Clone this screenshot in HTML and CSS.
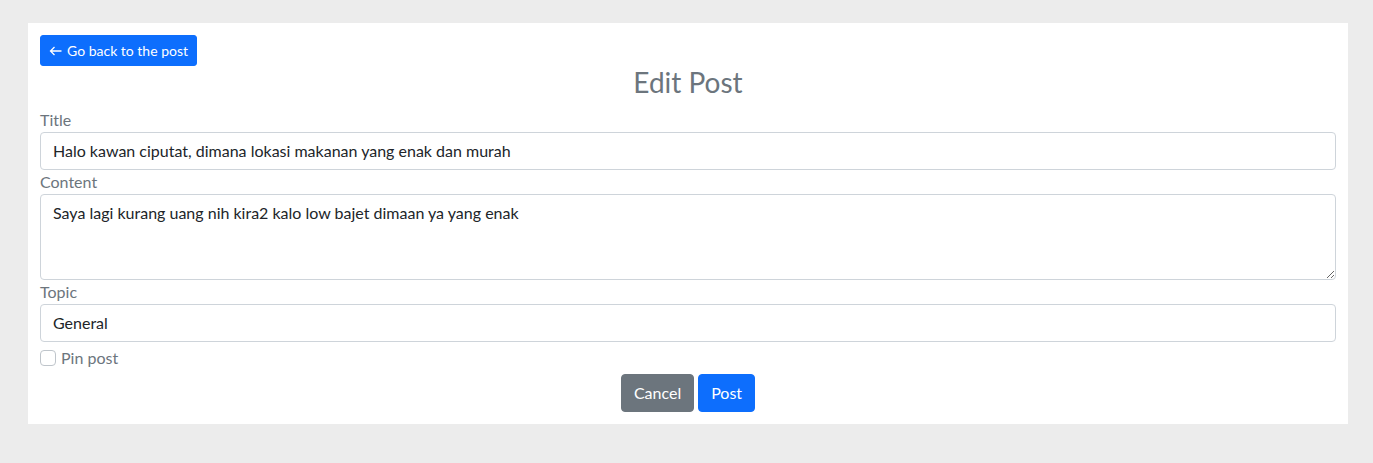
FILE: index.html
```html
<!DOCTYPE html>
<html lang="id">
<head>
<meta charset="utf-8">
<title>Edit Post</title>
<link rel="stylesheet" href="styles.css">
</head>
<body>
<main class="card">
  <div class="top-row">
    <a class="btn btn-primary btn-sm back-btn" href="#"><svg class="arrow" width="13" height="10" viewBox="0 0 13 10" aria-hidden="true"><path d="M12.5 5H1.5M5.5 1L1.5 5L5.5 9" fill="none" stroke="#fff" stroke-width="1.3"/></svg>Go back to the post</a>
  </div>
  <h3 class="page-title">Edit Post</h3>
  <form class="form">
    <label class="form-label" for="title">Title</label>
    <input class="form-control" id="title" type="text" value="Halo kawan ciputat, dimana lokasi makanan yang enak dan murah">
    <label class="form-label" for="content">Content</label>
    <textarea class="form-control" id="content" rows="3">Saya lagi kurang uang nih kira2 kalo low bajet dimaan ya yang enak</textarea>
    <label class="form-label" for="topic">Topic</label>
    <input class="form-control" id="topic" type="text" value="General">
    <div class="form-check">
      <input class="check-input" id="pin" type="checkbox">
      <label class="check-label" for="pin">Pin post</label>
    </div>
    <div class="actions">
      <button class="btn btn-secondary" type="button">Cancel</button>
      <button class="btn btn-primary" type="submit">Post</button>
    </div>
  </form>
</main>
</body>
</html>
```

FILE: styles.css
```css
* { box-sizing: border-box; }
html, body { margin: 0; padding: 0; }
body {
  background: #ececec;
  font-family: "Lato", "Open Sans", sans-serif;
  font-size: 16px;
  line-height: 1.5;
  color: #212529;
  padding: 23px 0 0 28px;
}
.card {
  width: 1320px;
  background: #fff;
  padding: 12px;
}
.top-row { display: flex; }
.btn {
  display: inline-block;
  font-family: inherit;
  font-size: 16px;
  line-height: 1.5;
  padding: 6px 12px;
  border: 1px solid transparent;
  border-radius: 4px;
  color: #fff;
  text-decoration: none;
  cursor: pointer;
}
.btn-sm { font-size: 14px; padding: 4px 8px; border-radius: 3px; }
.back-btn { display: inline-flex; align-items: center; gap: 5px; }
.arrow { display: block; margin-top: 1px; }
.btn-primary { background: #0d6efd; border-color: #0d6efd; }
.btn-secondary { background: #6c757d; border-color: #6c757d; }
.page-title {
  margin: 0 0 8px;
  text-align: center;
  font-size: 28px;
  font-weight: 400;
  line-height: 1.2;
  color: #6c757d;
}
.form { display: flex; flex-direction: column; }
.form-label { color: #6c757d; display: block; }
.form-control {
  display: block;
  width: 100%;
  font-family: inherit;
  font-size: 16px;
  line-height: 1.5;
  color: #212529;
  padding: 6px 12px;
  border: 1px solid #ced4da;
  border-radius: 4px;
  background: #fff;
  margin: 0;
}
textarea.form-control { resize: vertical; height: 86px; }
.form-check {
  display: flex;
  align-items: center;
  gap: 5px;
  min-height: 24px;
  margin-top: 4px;
}
.check-input {
  appearance: none;
  width: 16px;
  height: 16px;
  margin: 0;
  border: 1px solid #bfc5cb;
  border-radius: 4px;
  background: #fff;
}
.check-label { color: #6c757d; }
.actions {
  display: flex;
  justify-content: center;
  gap: 4px;
  margin-top: 4px;
}
```
